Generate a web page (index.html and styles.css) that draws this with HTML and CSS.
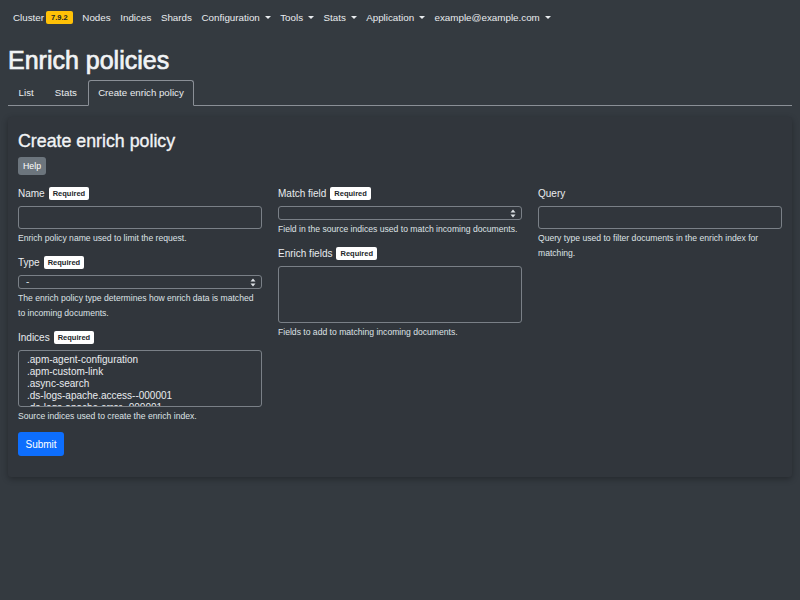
FILE: index.html
```html
<!DOCTYPE html>
<html lang="en">
<head>
<meta charset="utf-8">
<title>Enrich policies</title>
<link rel="stylesheet" href="styles.css">
</head>
<body>
<nav class="navbar">
  <span class="nav-item">Cluster <span class="ver-badge">7.9.2</span></span>
  <span class="nav-item">Nodes</span>
  <span class="nav-item">Indices</span>
  <span class="nav-item">Shards</span>
  <span class="nav-item dropdown">Configuration</span>
  <span class="nav-item dropdown">Tools</span>
  <span class="nav-item dropdown">Stats</span>
  <span class="nav-item dropdown">Application</span>
  <span class="nav-item dropdown">example@example.com</span>
</nav>
<main class="page">
  <h1 class="title">Enrich policies</h1>
  <div class="tabs">
    <span class="tab">List</span>
    <span class="tab">Stats</span>
    <span class="tab active">Create enrich policy</span>
  </div>
  <section class="card">
    <h3 class="card-title">Create enrich policy</h3>
    <button class="btn btn-help">Help</button>
    <div class="grid">
      <div class="col">
        <div class="group">
          <div class="label-row"><span>Name</span><span class="req">Required</span></div>
          <div class="input"></div>
          <div class="help">Enrich policy name used to limit the request.</div>
        </div>
        <div class="group">
          <div class="label-row"><span>Type</span><span class="req">Required</span></div>
          <div class="select"><span>-</span><svg class="arrows" width="6" height="9" viewBox="0 0 6 9"><path d="M3 0.5 L5.5 3.5 H0.5 Z M3 8.5 L5.5 5.5 H0.5 Z" fill="#dee2e6"/></svg></div>
          <div class="help">The enrich policy type determines how enrich data is matched to incoming documents.</div>
        </div>
        <div class="group">
          <div class="label-row"><span>Indices</span><span class="req">Required</span></div>
          <div class="multi">
            <div>.apm-agent-configuration</div>
            <div>.apm-custom-link</div>
            <div>.async-search</div>
            <div>.ds-logs-apache.access--000001</div>
            <div>.ds-logs-apache.error--000001</div>
          </div>
          <div class="help">Source indices used to create the enrich index.</div>
        </div>
        <button class="btn btn-submit">Submit</button>
      </div>
      <div class="col">
        <div class="group">
          <div class="label-row"><span>Match field</span><span class="req">Required</span></div>
          <div class="select"><span></span><svg class="arrows" width="6" height="9" viewBox="0 0 6 9"><path d="M3 0.5 L5.5 3.5 H0.5 Z M3 8.5 L5.5 5.5 H0.5 Z" fill="#dee2e6"/></svg></div>
          <div class="help">Field in the source indices used to match incoming documents.</div>
        </div>
        <div class="group">
          <div class="label-row"><span>Enrich fields</span><span class="req">Required</span></div>
          <div class="textarea"></div>
          <div class="help">Fields to add to matching incoming documents.</div>
        </div>
      </div>
      <div class="col">
        <div class="group">
          <div class="label-row"><span>Query</span></div>
          <div class="input"></div>
          <div class="help">Query type used to filter documents in the enrich index for matching.</div>
        </div>
      </div>
    </div>
  </section>
</main>
</body>
</html>
```
FILE: styles.css
```css
* { box-sizing: border-box; }
html, body { margin: 0; padding: 0; }
body {
  background: #343a40;
  color: #dee2e6;
  font-family: "Liberation Sans", Arial, sans-serif;
  font-size: 10px;
  line-height: 15px;
  height: 600px;
}
.navbar {
  display: flex;
  align-items: center;
  height: 35px;
  padding: 0 8px;
  color: #e9ecef;
  font-size: 9.8px;
}
.nav-item {
  padding: 0 4.8px;
  display: flex;
  align-items: center;
  white-space: nowrap;
}
.nav-item:first-child { padding-left: 5px; }
.ver-badge {
  display: inline-block;
  background: #ffc107;
  color: #212529;
  font-weight: bold;
  font-size: 7.5px;
  line-height: 13px;
  padding: 0 5px;
  border-radius: 2px;
  margin-left: 2px;
}
.dropdown::after {
  content: "";
  display: inline-block;
  margin-left: 4.8px;
  border-top: 3px solid #e9ecef;
  border-left: 3px solid transparent;
  border-right: 3px solid transparent;
}
.page { padding: 0 8px; }
.title {
  margin: 10px 0 5px;
  font-size: 25px;
  line-height: 30px;
  font-weight: normal;
  color: #f1f3f5;
  -webkit-text-stroke: 0.7px #f1f3f5;
}
.tabs {
  display: flex;
  border-bottom: 1px solid #8a8f96;
  font-size: 9.7px;
}
.tab {
  padding: 4px 9.6px 5px;
  line-height: 15px;
  border: 1px solid transparent;
  margin-bottom: -1px;
  border-radius: 3px 3px 0 0;
  color: #e9ecef;
}
.tab.active {
  border-color: #8a8f96 #8a8f96 #343a40;
  background: #343a40;
}
.card {
  margin-top: 11px;
  background: #31363c;
  box-shadow: 0 2px 6px rgba(0,0,0,0.3);
  border-radius: 3px;
  padding: 14px 10px 21px;
}
.card-title {
  margin: 0 0 5px;
  font-size: 17.8px;
  line-height: 21px;
  font-weight: normal;
  color: #f1f3f5;
  -webkit-text-stroke: 0.35px #f1f3f5;
}
.btn {
  border: 0;
  font-family: inherit;
  color: #fff;
  border-radius: 3px;
  display: block;
  cursor: pointer;
}
.btn-help {
  background: #6c757d;
  font-size: 8.75px;
  height: 18px;
  padding: 0 5px;
  margin-bottom: 10px;
}
.btn-submit {
  background: #0d6efd;
  font-size: 10px;
  height: 24px;
  padding: 0 7.5px;
  margin-top: 6px;
}
.grid {
  display: grid;
  grid-template-columns: repeat(3, 244px);
  column-gap: 16px;
}
.group { margin-bottom: 8px; }
.label-row {
  display: flex;
  align-items: center;
  height: 16px;
  margin-bottom: 5px;
  font-size: 10px;
  color: #e9ecef;
}
.req {
  margin-left: 4px;
  background: #fff;
  color: #212529;
  font-weight: bold;
  font-size: 7.5px;
  line-height: 13px;
  height: 13px;
  padding: 0 4px;
  border-radius: 2px;
}
.input {
  height: 23px;
  border: 1px solid #7a8087;
  border-radius: 3px;
}
.select {
  height: 14px;
  border: 1px solid #7a8087;
  border-radius: 3px;
  display: flex;
  align-items: center;
  justify-content: space-between;
  padding: 0 5px 0 7px;
  font-size: 10px;
  line-height: 12px;
}
.arrows { display: block; }
.multi {
  height: 57px;
  border: 1px solid #7a8087;
  border-radius: 3px;
  padding: 3px 8px 0;
  overflow: hidden;
  font-size: 10px;
  line-height: 12px;
  color: #e9ecef;
}
.textarea {
  height: 57px;
  border: 1px solid #7a8087;
  border-radius: 3px;
}
.help {
  margin-top: 2px;
  font-size: 8.6px;
  line-height: 15px;
  color: #dee2e6;
}
```
